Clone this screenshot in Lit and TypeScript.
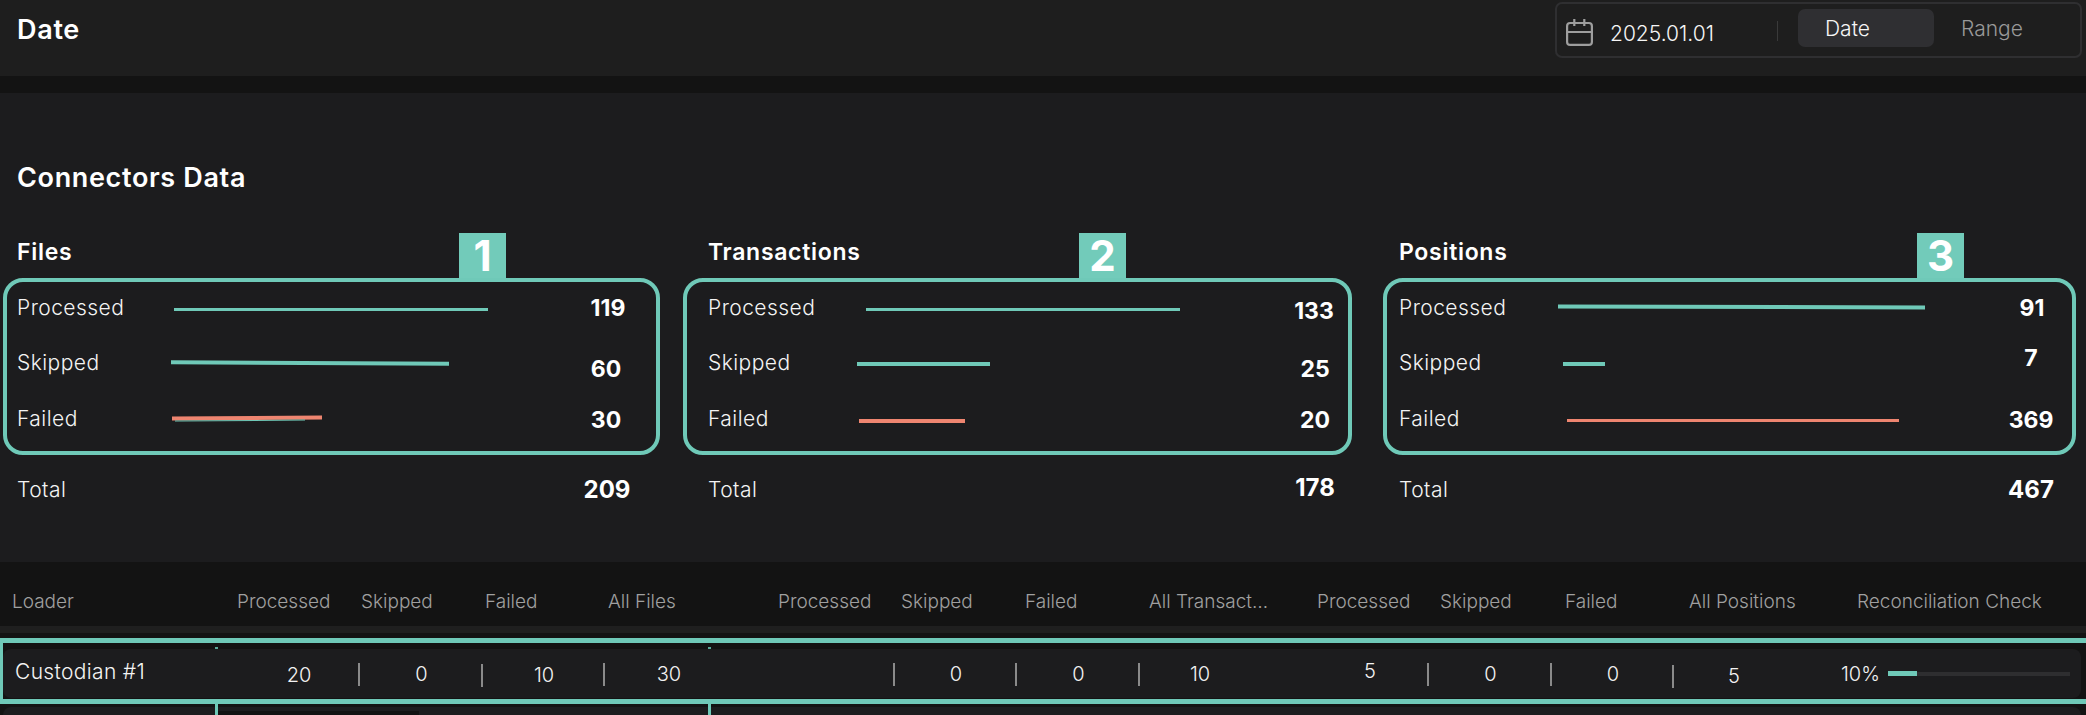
import { LitElement, html, css, nothing } from "lit";
import { customElement } from "lit/decorators.js";

const TEAL = "teal";
const RED = "red";

interface Row { label: string; barX: number; barW: number; barH: number; barY: number; tilt?: number; under?: boolean; color: string; value: string; valueC: number; valueY: number; }
interface Col { title: string; badge: string; badgeX: number; boxX: number; boxW: number; rows: Row[]; total: string; totalC: number; totalY: number; }

const cols: Col[] = [
  { title: "Files", badge: "1", badgeX: 441, boxX: -15, boxW: 657, total: "209", totalC: 589, totalY: 0,
    rows: [
      { label: "Processed", barX: 156, barW: 314, barH: 3, barY: 2, color: TEAL, value: "119", valueC: 590, valueY: 1 },
      { label: "Skipped", barX: 153, barW: 278, barH: 4, barY: 0, tilt: 0.27, color: TEAL, value: "60", valueC: 588, valueY: 6 },
      { label: "Failed", barX: 154, barW: 150, barH: 4, barY: -1, tilt: -0.4, under: true, color: RED, value: "30", valueC: 588, valueY: 1 },
    ] },
  { title: "Transactions", badge: "2", badgeX: 370, boxX: -26, boxW: 669, total: "178", totalC: 606, totalY: -2,
    rows: [
      { label: "Processed", barX: 157, barW: 314, barH: 3, barY: 2, color: TEAL, value: "133", valueC: 605, valueY: 4 },
      { label: "Skipped", barX: 148, barW: 133, barH: 4, barY: 1, color: TEAL, value: "25", valueC: 606, valueY: 6 },
      { label: "Failed", barX: 150, barW: 106, barH: 4, barY: 2, color: RED, value: "20", valueC: 606, valueY: 1 },
    ] },
  { title: "Positions", badge: "3", badgeX: 517, boxX: -17, boxW: 693, total: "467", totalC: 631, totalY: 0,
    rows: [
      { label: "Processed", barX: 158, barW: 367, barH: 4, barY: 0, tilt: 0.15, color: TEAL, value: "91", valueC: 632, valueY: 1 },
      { label: "Skipped", barX: 163, barW: 42, barH: 4, barY: 1, color: TEAL, value: "7", valueC: 631, valueY: -5 },
      { label: "Failed", barX: 167, barW: 332, barH: 3, barY: 1, color: RED, value: "369", valueC: 631, valueY: 1 },
    ] },
];

const heads = ["Loader", "Processed", "Skipped", "Failed", "All Files", "Processed", "Skipped", "Failed", "All Transact…", "Processed", "Skipped", "Failed", "All Positions", "Reconciliation Check"];

interface Cell { v: string; sep: boolean; dy: number; }
const cells: Cell[] = [
  { v: "20", sep: false, dy: 2 }, { v: "0", sep: true, dy: 1 }, { v: "10", sep: true, dy: 2 }, { v: "30", sep: true, dy: 1 },
  { v: "", sep: false, dy: 0 },
  { v: "0", sep: true, dy: 1 }, { v: "0", sep: true, dy: 1 }, { v: "10", sep: true, dy: 1 },
  { v: "", sep: false, dy: 0 },
  { v: "5", sep: false, dy: -2 }, { v: "0", sep: true, dy: 1 }, { v: "0", sep: true, dy: 1 }, { v: "5", sep: true, dy: 3 },
  { v: "", sep: false, dy: 0 },
];

@customElement("app-root")
export class AppRoot extends LitElement {
  static styles = css`
    :host { display: block; width: 2086px; height: 715px; overflow: hidden; background: #131313; font-family: Inter, "Noto Sans", sans-serif; color: #fff; position: relative; }
    .top { height: 76px; background: #1e1e1e; display: flex; justify-content: space-between; align-items: flex-start; padding: 0 4px 0 17px; box-sizing: border-box; }
    .title { font-size: 27px; font-weight: 600; line-height: 60px; letter-spacing: 0.7px; }
    .picker { margin-top: 2px; width: 527px; height: 56px; box-sizing: border-box; border: 2px solid #2f2f31; border-radius: 7px; display: flex; align-items: center; padding-left: 9px; }
    .picker svg { width: 27px; height: 27px; flex: none; margin-top: 4px; color: #9e9e9e; }
    .date { font-size: 21px; font-weight: 300; margin-left: 17px; width: 167px; padding-top: 6px; color: #f6f6f6; }
    .divider { width: 1px; height: 20px; background: #3a3a3a; margin-right: 20px; margin-top: 2px; }
    .tab { width: 136px; height: 38px; border-radius: 7px; background: #2f2f32; font-size: 21px; font-weight: 300; display: flex; align-items: center; padding-left: 27px; box-sizing: border-box; color: #f6f6f6; margin-top: -4px; }
    .tab.off { background: none; color: #999; width: auto; }
    .strip { height: 17px; }
    .panel { height: 469px; background: #1c1c1e; padding: 0 0 0 18px; box-sizing: border-box; }
    .h2 { font-size: 27px; font-weight: 600; margin: 0 0 0 -1px; padding-top: 68px; line-height: 34px; height: 144px; box-sizing: border-box; letter-spacing: 0.65px; }
    .cols { display: grid; grid-template-columns: repeat(3, 640px); column-gap: 51px; }
    .col { position: relative; }
    .coltitle { font-size: 23px; font-weight: 600; line-height: 30px; height: 42px; letter-spacing: 0.7px; margin-left: -1px; }
    .rows { display: flex; flex-direction: column; }
    .row { display: flex; align-items: center; height: 56px; }
    .label { font-size: 21px; font-weight: 300; color: #f4f4f4; width: 0; white-space: nowrap; letter-spacing: 0.45px; margin-left: -1px; margin-right: 1px; }
    .row:nth-child(2) .label { margin-top: -1px; }
    .row:nth-child(3) .label { margin-top: -2px; }
    .bar { flex: none; position: relative; }
    .bar.teal { background: #6fc9b8; }
    .bar.red { background: #ee8570; }
    .under { position: absolute; left: 3px; top: 4px; width: 130px; height: 1px; background: #6fc9b8; }
    .value { font-size: 23px; font-weight: 700; width: 80px; text-align: center; flex: none; margin-left: auto; }
    .total { margin-top: 14px; }
    .total .value { font-size: 24px; }
    .box { position: absolute; top: 41px; height: 177px; box-sizing: border-box; border: 4px solid #6fc9b8; border-radius: 20px; pointer-events: none; }
    .badge { position: absolute; top: -4px; width: 47px; height: 45px; background: #72cbba; color: #fff; font-size: 42px; font-weight: 700; display: flex; align-items: center; justify-content: center; }

    .thead { height: 64px; display: grid; grid-template-columns: 237px 124px 124px 123px 170px 123px 124px 124px 168px 123px 125px 124px 168px 1fr; align-items: center; font-size: 19px; font-weight: 300; color: #a0a0a0; }
    .th { white-space: nowrap; padding-top: 14px; }
    .th:first-child { padding-left: 12px; }
    .thline { height: 7px; background: #1f1f1f; }
    .gap { height: 16px; }
    .trow { height: 49px; margin: 0 5px 0 3px; background: #1c1c1e; border-radius: 8px; display: grid; grid-template-columns: 234px 122px 123px 122px 128px 162px 122px 123px 120px 51px 118px 123px 122px 120px 48px 1fr; align-items: center; }
    .name { font-size: 21px; font-weight: 300; padding-left: 12px; color: #f4f4f4; margin-top: -4px; letter-spacing: 0.35px; }
    .cell { font-size: 20px; font-weight: 300; text-align: center; position: relative; height: 23px; line-height: 23px; color: #f2f2f2; padding-left: 2px; box-sizing: border-box; }
    .cell.sep::before { content: ""; position: absolute; left: -1px; top: 0; width: 2px; height: 23px; background: #8a8a8a; }
    .rec { display: flex; align-items: center; font-size: 20px; font-weight: 300; color: #f2f2f2; gap: 8px; }
    .track { width: 182px; height: 4px; background: #2e2e30; display: flex; align-items: center; }
    .fill { width: 29px; height: 5px; background: #6fc9b8; }
    .hl { position: absolute; left: 0; right: 0; top: 638px; height: 66px; box-sizing: border-box; border: 5px solid #6fc9b8; border-left-width: 3px; border-right: none; pointer-events: none; }
    .stub { position: absolute; top: 704px; height: 11px; width: 3px; background: #6fc9b8; }
    .tick { position: absolute; top: 647px; height: 2px; width: 3px; background: #5aa899; }
    .next { position: absolute; left: 3px; right: 5px; top: 707px; height: 20px; background: #1c1c1e; border-radius: 8px; }
    .patch { position: absolute; left: 218px; top: 711px; width: 201px; height: 4px; background: #121212; }
  `;

  private bar(r: Row) {
    const tilt = r.tilt ? `transform:rotate(${r.tilt}deg);` : "";
    return html`<div class="bar ${r.color}" style="margin-left:${r.barX}px;width:${r.barW}px;height:${r.barH}px;margin-top:${r.barY * 2}px;${tilt}">${r.under ? html`<div class="under"></div>` : nothing}</div>`;
  }

  render() {
    return html`
      <div class="top">
        <div class="title">Date</div>
        <div class="picker">
          <svg viewBox="0 0 27 27" fill="none" stroke="currentColor" stroke-width="2.2"><rect x="1.1" y="4" width="24.8" height="21.9" rx="3"/><path d="M1 13h25M8.3 0v7M18.3 0v7"/></svg>
          <div class="date">2025.01.01</div>
          <div class="divider"></div>
          <div class="tab">Date</div>
          <div class="tab off">Range</div>
        </div>
      </div>
      <div class="strip"></div>
      <div class="panel">
        <h2 class="h2">Connectors Data</h2>
        <div class="cols">
          ${cols.map((c) => html`
            <div class="col">
              <div class="coltitle">${c.title}</div>
              <div class="rows">
                ${c.rows.map((r) => html`
                  <div class="row">
                    <div class="label">${r.label}</div>
                    ${this.bar(r)}
                    <div class="value" style="margin-right:${600 - r.valueC}px;margin-top:${r.valueY * 2}px">${r.value}</div>
                  </div>`)}
                <div class="row total">
                  <div class="label">Total</div>
                  <div class="value" style="margin-right:${600 - c.totalC}px;margin-top:${c.totalY * 2}px">${c.total}</div>
                </div>
              </div>
              <div class="box" style="left:${c.boxX}px;width:${c.boxW}px"></div>
              <div class="badge" style="left:${c.badgeX}px">${c.badge}</div>
            </div>`)}
        </div>
      </div>
      <div class="table">
        <div class="thead">${heads.map((h) => html`<div class="th">${h}</div>`)}</div>
        <div class="thline"></div>
        <div class="gap"></div>
        <div class="trow">
          <div class="name">Custodian #1</div>
          ${cells.map((c) => html`<div class="cell ${c.sep ? "sep" : ""}" style="margin-top:${c.dy * 2}px">${c.v}</div>`)}
          <div class="rec"><span>10%</span><div class="track"><div class="fill"></div></div></div>
        </div>
      </div>
      <div class="next"></div>
      <div class="patch"></div>
      <div class="hl"></div>
      <div class="stub" style="left:215px"></div>
      <div class="stub" style="left:708px"></div>
      <div class="tick" style="left:215px"></div>
      <div class="tick" style="left:708px"></div>
    `;
  }
}
